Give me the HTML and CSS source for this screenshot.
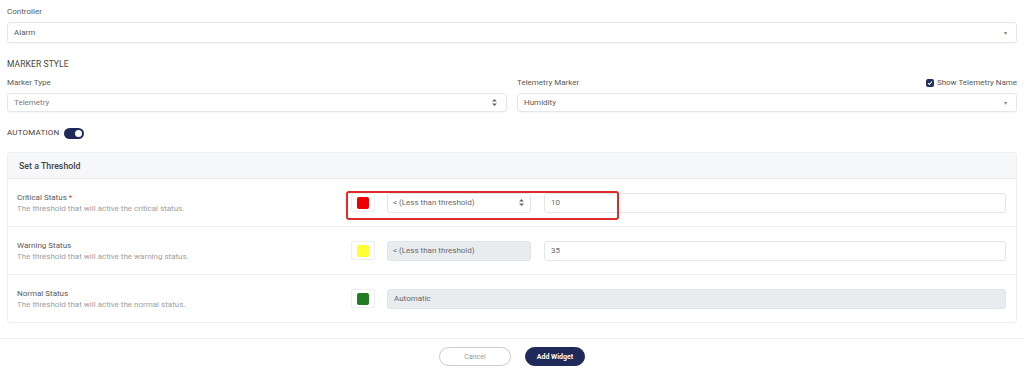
FILE: index.html
```html
<!DOCTYPE html>
<html>
<head>
<meta charset="utf-8">
<link rel="stylesheet" href="styles.css">
</head>
<body>
<div class="page">
  <div class="field">
    <div class="label">Controller</div>
    <div class="select tall"><span>Alarm</span><span class="caret">&#9662;</span></div>
  </div>

  <div class="heading">MARKER STYLE</div>

  <div class="two-col">
    <div class="field col">
      <div class="label">Marker Type</div>
      <div class="select"><span class="muted">Telemetry</span><span class="updown"><svg width="5" height="7" viewBox="0 0 5 7"><path d="M2.5 0 L5 2.6 H0Z M2.5 7 L5 4.4 H0Z" fill="#666"/></svg></span></div>
    </div>
    <div class="field col">
      <div class="label-row">
        <div class="label">Telemetry Marker</div>
        <div class="check"><span class="box"><svg width="6" height="6" viewBox="0 0 6 6"><path d="M1 3.2 L2.4 4.5 L5 1.5" stroke="#fff" stroke-width="1.1" fill="none"/></svg></span>Show Telemetry Name</div>
      </div>
      <div class="select"><span>Humidity</span><span class="caret">&#9662;</span></div>
    </div>
  </div>

  <div class="automation">
    <span>AUTOMATION</span>
    <span class="toggle"><span class="knob"></span></span>
  </div>

  <div class="card">
    <div class="card-head">Set a Threshold</div>

    <div class="row">
      <div class="info">
        <div class="title">Critical Status <span class="req">*</span></div>
        <div class="desc">The threshold that will active the critical status.</div>
      </div>
      <div class="controls">
        <div class="swatch"><span class="sq red"></span></div>
        <div class="cond"><span>&lt; (Less than threshold)</span><svg width="5" height="7" viewBox="0 0 5 7"><path d="M2.5 0 L5 2.6 H0Z M2.5 7 L5 4.4 H0Z" fill="#666"/></svg></div>
        <div class="input">10</div>
      </div>
      <div class="highlight"></div>
    </div>

    <div class="row">
      <div class="info">
        <div class="title">Warning Status</div>
        <div class="desc">The threshold that will active the warning status.</div>
      </div>
      <div class="controls">
        <div class="swatch"><span class="sq yellow"></span></div>
        <div class="cond disabled"><span>&lt; (Less than threshold)</span></div>
        <div class="input">35</div>
      </div>
    </div>

    <div class="row last">
      <div class="info">
        <div class="title">Normal Status</div>
        <div class="desc">The threshold that will active the normal status.</div>
      </div>
      <div class="controls">
        <div class="swatch"><span class="sq green"></span></div>
        <div class="input disabled">Automatic</div>
      </div>
    </div>
  </div>
</div>

<div class="footer">
  <button class="btn cancel">Cancel</button>
  <button class="btn primary">Add Widget</button>
</div>
</body>
</html>
```

FILE: styles.css
```css
* { box-sizing: border-box; }
html, body { margin: 0; padding: 0; background: #fff; }
body {
  font-family: Roboto, "Liberation Sans", sans-serif;
  color: #4a4a4a;
  font-size: 8px;
  width: 1024px;
  height: 375px;
  overflow: hidden;
}
.page { padding: 7px 7px 0 7px; }
.label { font-size: 8px; line-height: 10px; color: #5a5a5a; margin-bottom: 5px; }
.select {
  display: flex;
  align-items: center;
  justify-content: space-between;
  height: 19px;
  border: 1px solid #e4e6ea;
  border-radius: 3px;
  padding: 0 9px 0 6px;
  font-size: 8px;
  color: #5a5a5a;
  box-shadow: 0 1px 1px rgba(0,0,0,0.03);
}
.select.tall { height: 21px; }
.select .muted { color: #7a7a7a; }
.caret { font-size: 6px; color: #888; }
.updown { display: flex; align-items: center; }
.heading { font-size: 8.5px; line-height: 12px; margin-top: 15px; color: #444; letter-spacing: 0.1px; }
.two-col { display: flex; gap: 10px; margin-top: 8px; }
.col { flex: 1; }
.label-row { display: flex; justify-content: space-between; align-items: flex-start; }
.check { display: flex; align-items: center; gap: 3px; font-size: 8px; line-height: 10px; color: #5a5a5a; margin-top: 0; }
.check .box {
  width: 8px; height: 8px; border-radius: 2px; background: #22305f;
  display: flex; align-items: center; justify-content: center;
}
.automation { display: flex; align-items: center; gap: 5px; margin-top: 15px; font-size: 8px; color: #444; line-height: 12px; letter-spacing: 0.2px; }
.toggle {
  width: 20px; height: 11px; border-radius: 6px; background: #1f2a5a;
  display: flex; align-items: center; justify-content: flex-end; padding: 0 2px;
}
.knob { width: 7px; height: 7px; border-radius: 50%; background: #fff; }
.card {
  margin-top: 13px;
  border: 1px solid #eceef1;
  border-radius: 3px;
}
.card-head {
  height: 26px;
  background: #f6f7f9;
  border-bottom: 1px solid #e6e8eb;
  display: flex; align-items: center;
  padding-left: 11px;
  font-size: 8.8px; font-weight: 500; color: #444;
}
.row {
  position: relative;
  display: flex;
  align-items: center;
  height: 48px;
  border-bottom: 1px solid #eceef1;
  padding: 0 10px 0 9px;
}
.row.last { border-bottom: none; height: 47px; }
.info { width: 334px; padding-top: 1px; }
.title { font-size: 8px; line-height: 11px; color: #5a5a5a; }
.req { color: #e53935; }
.desc { font-size: 8px; line-height: 11px; color: #a0a0a0; }
.controls { flex: 1; display: flex; align-items: center; }
.swatch {
  width: 24px; height: 19px;
  border: 1px solid #eceef1; border-radius: 2px;
  display: flex; align-items: center; justify-content: center;
  margin-right: 12px;
}
.sq { width: 12px; height: 12px; border-radius: 2px; }
.sq.red { background: #ee0000; }
.sq.yellow { background: #ffff33; }
.sq.green { background: #237b22; }
.cond {
  width: 144px; height: 20px;
  border: 1px solid #e4e6ea; border-radius: 3px;
  display: flex; align-items: center; justify-content: space-between;
  padding: 0 6px 0 5px;
  font-size: 8px; color: #6a6a6a;
  margin-right: 13px;
}
.cond.disabled { background: #e9ecef; border-color: #e0e3e7; }
.input {
  flex: 1; height: 20px;
  border: 1px solid #e4e6ea; border-radius: 3px;
  display: flex; align-items: center;
  padding: 0 6px;
  font-size: 8px; color: #6a6a6a;
}
.input.disabled { background: #e9ecef; border-color: #e0e3e7; }
.highlight {
  position: absolute;
  left: 338px; top: 12px;
  width: 273px; height: 29px;
  border: 2px solid #dd2b2b;
  border-radius: 3px;
  pointer-events: none;
}
.footer {
  margin-top: 15px;
  border-top: 1px solid #eceef1;
  display: flex;
  justify-content: center;
  gap: 14px;
  padding-top: 8px;
}
.btn {
  font-family: Roboto, "Liberation Sans", sans-serif;
  height: 19px;
  border-radius: 10px;
  font-size: 7px;
  padding: 0;
  cursor: pointer;
}
.btn.cancel { width: 72px; background: #fff; border: 1px solid #c9ccd1; color: #999; }
.btn.primary { width: 60px; background: #1f2a5a; border: 1px solid #1f2a5a; color: #fff; font-weight: 700; }
```
